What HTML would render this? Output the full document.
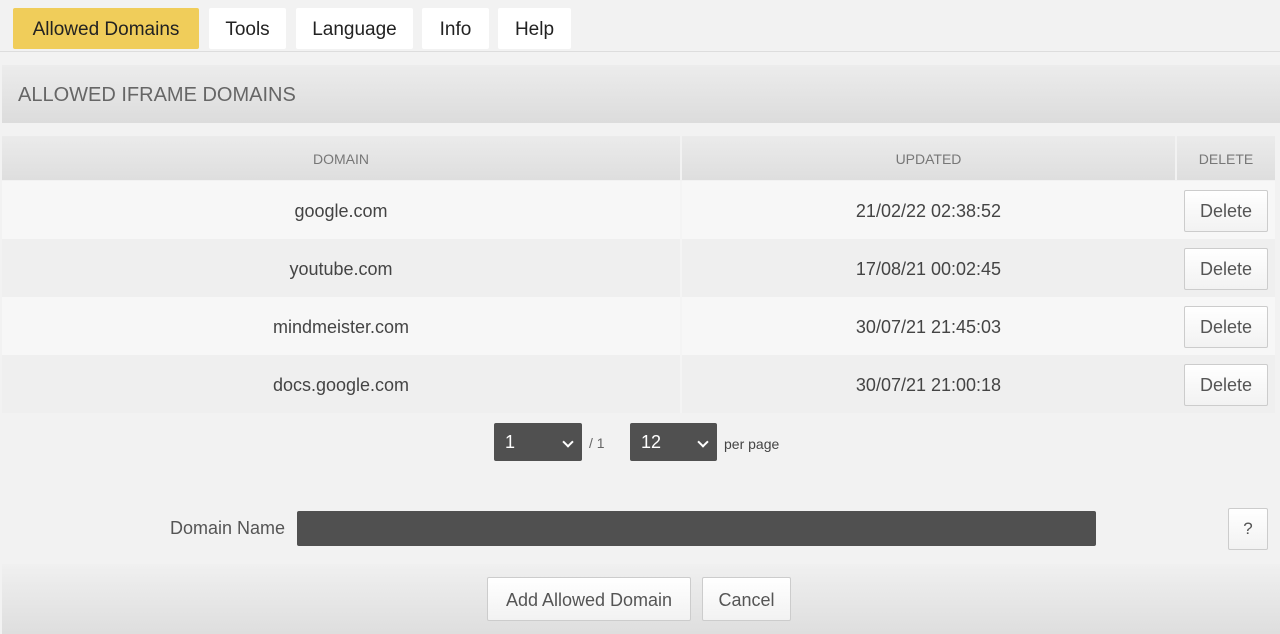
<!DOCTYPE html>
<html><head><style>
body{margin:0;width:1280px;height:634px;background:#f2f2f2;font-family:"Liberation Sans",sans-serif;position:relative;overflow:hidden;color:#333}
.a{position:absolute;box-sizing:border-box}
.tab{top:8px;height:41px;background:#fff;font-size:19px;line-height:44px;text-align:center;color:#222;border-radius:2px}
.hd{background:linear-gradient(#ececec,#dcdcdc)}
.th{top:136px;height:44px;font-size:14px;color:#777;line-height:46px;text-align:center;background:linear-gradient(#ebebeb,#dedede)}
.row{left:2px;width:1273px;height:58px;font-size:18px;color:#444;line-height:60px}
.row span{position:absolute;text-align:center}
.btn{background:linear-gradient(#fff,#f2f2f2);border:1px solid #ccc;border-radius:2px;font-size:18px;color:#555;text-align:center}
.sel{background:#505050;border-radius:2px;color:#fff;font-size:18px;line-height:38px;padding-left:11px}
.sel i{position:absolute;right:10px;top:15px;width:6px;height:6px;border-right:2px solid #fff;border-bottom:2px solid #fff;transform:rotate(45deg)}
</style></head><body>
<div class="a tab" style="left:13px;width:186px;background:#f0cd5a">Allowed Domains</div>
<div class="a tab" style="left:209px;width:77px">Tools</div>
<div class="a tab" style="left:296px;width:117px">Language</div>
<div class="a tab" style="left:422px;width:67px">Info</div>
<div class="a tab" style="left:498px;width:73px">Help</div>
<div class="a" style="left:0;top:51px;width:1280px;height:1px;background:#ddd"></div>
<div class="a hd" style="left:2px;top:65px;width:1278px;height:58px;font-size:20px;color:#666;line-height:60px;padding-left:16px">ALLOWED IFRAME DOMAINS</div>
<div class="a th" style="left:2px;width:678px">DOMAIN</div>
<div class="a th" style="left:682px;width:493px">UPDATED</div>
<div class="a th" style="left:1177px;width:98px">DELETE</div>
<div class="a row" style="top:181px;background:#f7f7f7"><span style="left:0;width:678px">google.com</span><span style="left:680px;width:493px">21/02/22 02:38:52</span></div>
<div class="a row" style="top:239px;background:#efefef"><span style="left:0;width:678px">youtube.com</span><span style="left:680px;width:493px">17/08/21 00:02:45</span></div>
<div class="a row" style="top:297px;background:#f7f7f7"><span style="left:0;width:678px">mindmeister.com</span><span style="left:680px;width:493px">30/07/21 21:45:03</span></div>
<div class="a row" style="top:355px;background:#efefef"><span style="left:0;width:678px">docs.google.com</span><span style="left:680px;width:493px">30/07/21 21:00:18</span></div>
<div class="a" style="left:680px;top:181px;width:2px;height:232px;background:#f4f4f4"></div>
<div class="a btn" style="left:1184px;top:190px;width:84px;height:42px;line-height:40px">Delete</div>
<div class="a btn" style="left:1184px;top:248px;width:84px;height:42px;line-height:40px">Delete</div>
<div class="a btn" style="left:1184px;top:306px;width:84px;height:42px;line-height:40px">Delete</div>
<div class="a btn" style="left:1184px;top:364px;width:84px;height:42px;line-height:40px">Delete</div>
<div class="a sel" style="left:494px;top:423px;width:88px;height:38px">1<i></i></div>
<div class="a" style="left:589px;top:435px;font-size:14px;color:#666">/ 1</div>
<div class="a sel" style="left:630px;top:423px;width:87px;height:38px">12<i></i></div>
<div class="a" style="left:724px;top:436px;font-size:14px;color:#444">per page</div>
<div class="a" style="left:100px;top:518px;width:185px;text-align:right;font-size:18px;color:#555">Domain Name</div>
<div class="a" style="left:297px;top:511px;width:799px;height:35px;background:#505050;border-radius:2px"></div>
<div class="a btn" style="left:1228px;top:508px;width:40px;height:42px;line-height:40px;font-size:17px">?</div>
<div class="a hd" style="left:2px;top:564px;width:1278px;height:70px;background:linear-gradient(#f0f0f0,#dedede)"></div>
<div class="a btn" style="left:487px;top:577px;width:204px;height:44px;line-height:44px">Add Allowed Domain</div>
<div class="a btn" style="left:702px;top:577px;width:89px;height:44px;line-height:44px">Cancel</div>
</body></html>
